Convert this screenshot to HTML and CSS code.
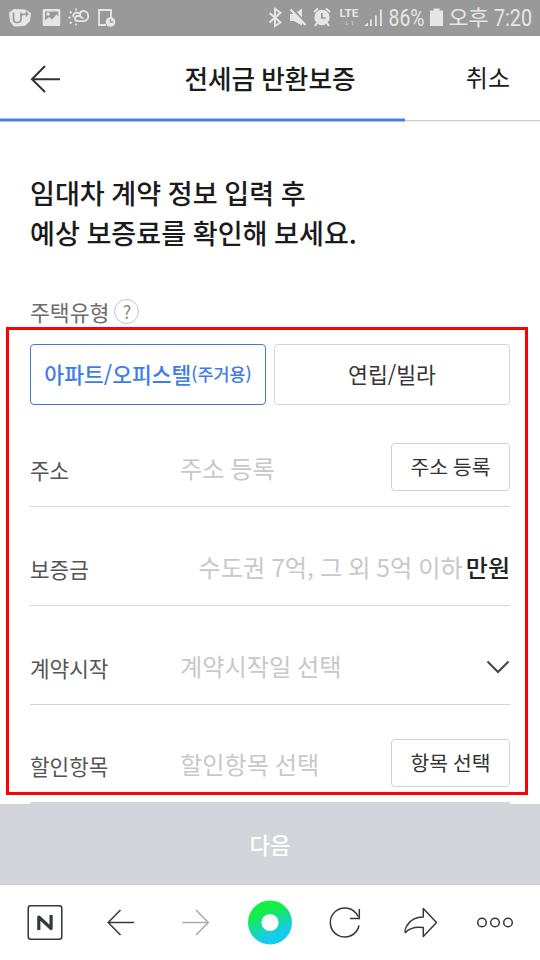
FILE: index.html
```html
<!DOCTYPE html>
<html lang="ko">
<head>
<meta charset="utf-8">
<title>전세금 반환보증</title>
<link rel="stylesheet" href="styles.css">
</head>
<body>
<div class="app">
  <div class="status">
    <svg width="130" height="36" viewBox="0 0 130 36" fill="#e6e6e6">
      <path d="M9 12.500L14 9l11 .5 6 3.500-1 8-5 5-11 .5-4-5z"/>
      <path d="M13.500 12.500V19q0 3.500 3.700 3.500T21 19v-6.500M21 17q0-3 4-3M26.500 11.500v5M24.500 14h4" fill="none" stroke="#999" stroke-width="1.700"/>
      <path fill-rule="evenodd" d="M44 9h15q1.300 0 1.300 1.300v14.200q0 1.500-1.300 1.500H44q-1.300 0-1.300-1.500V10.300Q42.700 9 44 9zM45 11.500v9l4-3.500 3 2.500 4.500-5 1.800 2V11.500z"/>
      <circle cx="48" cy="14" r="1.800"/>
      <g fill="none" stroke="#e6e6e6" stroke-width="1.800">
        <path d="M79.300 13.800a3.500 3.500 0 0 0-6 3.200M80.500 16.500c-1-1-5.500-1-5.500 2 0 1.800 1.300 2.700 3 2.700h5c3 0 5.200-2 5.200-5s-2-5.200-4.700-5.200c-2 0-3.500 1.500-3.500 3.500 0 2.200 1.500 3.500 3.500 3.500"/>
        <path d="M76 8.500v2M70 11.500l1.500 1.500M68.500 17.500h2M70 23.500l1.500-1.500M76 23.500v2"/>
        <path d="M106 25h-7V10h12v8.500"/>
      </g>
      <circle cx="110.500" cy="22" r="4.800"/>
      <path d="M110.500 19v3.200h2.700" fill="none" stroke="#999" stroke-width="1.300"/>
    </svg>
    <svg width="275" height="36" viewBox="265 0 275 36" fill="#e6e6e6">
      <path d="M269.500 13l11 9.500-5.500 3.500V9l5.500 3.800-11 9.700" fill="none" stroke="#e6e6e6" stroke-width="2"/>
      <path d="M290 14h4l8-5.500v17L294 21h-4z"/>
      <path d="M292 8.500l16 17" stroke="#999" stroke-width="2.500"/>
      <path d="M290.500 9.500l15 15.500" stroke="#e6e6e6" stroke-width="2.200"/>
      <circle cx="322" cy="17.500" r="7.700"/>
      <path d="M314 12l4-3.500M330 12l-4-3.500M317 23l-2 3M327 23l2 3" stroke="#e6e6e6" stroke-width="2"/>
      <path d="M321.800 13v5h4" fill="none" stroke="#999" stroke-width="1.700"/>
      <text class="lte" x="339.500" y="17" textLength="19" lengthAdjust="spacingAndGlyphs">LTE</text>
      <path d="M346.500 21v4m-1.500-1.500l1.500 1.500 1.500-1.500M352.500 25v-4m-1.500 1.500l1.500-1.500 1.500 1.500" fill="none" stroke="#bbb"/>
      <path d="M364 26h4v-3.500zM370 19.500h1.800V26H370zM375 15.500h1.800V26H375zM380 9.500h1.800V26H380z"/>
      <text class="num" x="388.500" y="26" textLength="36" lengthAdjust="spacingAndGlyphs">86%</text>
      <path d="M433.500 8.500h6v2h3.500V26h-13V10.500h3.500z"/>
      <text class="ko" x="448.500" y="25" textLength="40" lengthAdjust="spacingAndGlyphs">오후</text>
      <text class="num" x="494" y="26" textLength="38" lengthAdjust="spacingAndGlyphs">7:20</text>
    </svg>
  </div>

  <header class="header">
    <svg class="back" width="32" height="30" viewBox="0 0 32 30" fill="none" stroke="#333" stroke-width="2"><path d="M15 2L2 15.200 15 28M2 15.200h28"/></svg>
    <h1 class="title">전세금 반환보증</h1>
    <span class="cancel">취소</span>
  </header>
  <div class="progress"><div class="progress-fill"></div></div>

  <main class="content">
    <h2 class="headline">임대차 계약 정보 입력 후<br>예상 보증료를 확인해 보세요.</h2>
    <div class="type-label"><span>주택유형</span><span class="help">?</span></div>
    <div class="types">
      <div class="type selected">아파트/오피스텔<small>(주거용)</small></div>
      <div class="type">연립/빌라</div>
    </div>
    <div class="row">
      <span class="label">주소</span><span class="value">주소 등록</span><span class="btn">주소 등록</span>
    </div>
    <div class="row">
      <span class="label">보증금</span><span class="value amount">수도권 7억, 그 외 5억 이하</span><span class="unit">만원</span>
    </div>
    <div class="row">
      <span class="label">계약시작</span><span class="value">계약시작일 선택</span>
      <svg class="chevron" width="24" height="16" viewBox="0 0 24 16" fill="none" stroke="#444" stroke-width="2"><path d="M1.500 2.500L12 13 22.500 2.500"/></svg>
    </div>
    <div class="row">
      <span class="label">할인항목</span><span class="value">할인항목 선택</span><span class="btn">항목 선택</span>
    </div>
    <div class="highlight"></div>
  </main>

  <div class="next">다음</div>
  <nav class="nav">
    <svg width="540" height="75" viewBox="0 885 540 75" fill="none" stroke="#34383c" stroke-width="1.500">
      <defs><linearGradient id="ring" x1=".3" y1="0" x2=".7" y2="1"><stop offset=".12" stop-color="#12ef47"/><stop offset=".9" stop-color="#18cbed"/></linearGradient></defs>
      <rect x="28.200" y="905.700" width="33.600" height="33.600" rx="2.500"/>
      <path d="M38.800 930V917l12.300 11.500V915" stroke-width="3.200" stroke-linejoin="round"/>
      <path d="M120.500 910l-12.300 12.500 12.300 12.500M108.200 922.500H134"/>
      <path d="M196 910l12.300 12.500L196 935M208.300 922.500h-26" stroke="#aaa"/>
      <circle cx="270" cy="922.500" r="15.300" stroke="url(#ring)" stroke-width="13.400"/>
      <path d="M359 925.500A14.500 14.500 0 1 1 358 916.500M359.300 909v9.500H350"/>
      <path d="M423.300 908.500L436.500 922.500l-13.200 14v-9q-12-1.500-17.800 5-1.500-1.500 1.500-7 5-8.500 16.300-8.500z" stroke-linejoin="round"/>
      <circle cx="482" cy="922.500" r="4.300"/><circle cx="495" cy="922.500" r="4.300"/><circle cx="508" cy="922.500" r="4.300"/>
    </svg>
  </nav>
</div>
</body>
</html>
```
FILE: styles.css
```css
* { box-sizing: border-box; }
body {
  margin: 0;
  background: #fff;
  font-family: "Noto Sans CJK KR", sans-serif;
  color: #1b1b1b;
}
svg { display: block; flex: none; }
.app {
  width: 540px;
  height: 960px;
  display: flex;
  flex-direction: column;
  overflow: hidden;
}
.status {
  height: 36px;
  flex: none;
  display: flex;
  justify-content: space-between;
  background: #999;
}
.lte { font: bold 11.5px Roboto, sans-serif; }
.num { font: 23px Roboto, sans-serif; }
.ko { font: 21px "Noto Sans CJK KR", sans-serif; }

.header {
  height: 82px;
  flex: none;
  padding: 0 30px;
  display: grid;
  grid-template-columns: 80px 1fr 80px;
  align-items: center;
}
.back { margin-top: 4px; }
.title {
  margin: 1px 0 0;
  text-align: center;
  font-size: 25.6px;
  font-weight: 500;
  line-height: 40px;
  word-spacing: -1px;
  white-space: nowrap;
}
.cancel {
  text-align: right;
  font-size: 24px;
  line-height: 40px;
}
.progress {
  height: 4px;
  flex: none;
  background: linear-gradient(#fff 2px, #ccd0d0 2px, #ccd0d0 3px, #eee 3px);
}
.progress-fill {
  width: 405px;
  height: 4px;
  background: #477ed8;
  border-top: 1px solid #a3c2f2;
  border-bottom: 1px solid #a3c2f2;
}
.content {
  height: 682px;
  flex: none;
  position: relative;
  padding: 51px 30px 0;
}
.headline {
  margin: 0;
  font-size: 27.1px;
  font-weight: 500;
  line-height: 39.5px;
  word-spacing: -1px;
  white-space: nowrap;
}
.type-label {
  height: 36px;
  margin-top: 44px;
  display: flex;
  gap: 5px;
  font-size: 21.6px;
  line-height: 32px;
  color: #6b6b6b;
}
.help {
  width: 25px;
  height: 25px;
  margin-top: 1px;
  border: 1.5px solid #c4c4c4;
  border-radius: 50%;
  text-align: center;
  font: 18px/23px "Noto Sans CJK KR", sans-serif;
  color: #888;
}
.types {
  margin-top: 12px;
  display: grid;
  grid-template-columns: 1fr 1fr;
  gap: 8px;
}
.type {
  height: 61px;
  border: 1px solid #d4d6d8;
  border-radius: 4px;
  padding-bottom: 2px;
  display: flex;
  align-items: center;
  justify-content: center;
  font-size: 21.6px;
  color: #333;
  white-space: nowrap;
}
.type.selected {
  border-color: #4277cf;
  color: #3e7ceb;
  font-weight: 500;
  font-size: 21.5px;
}
.type small { font-size: 17.4px; }
.row {
  height: 99px;
  padding-top: 26px;
  border-bottom: 1px solid #d6d6d6;
  display: flex;
  align-items: center;
}
.types + .row { height: 102px; padding-top: 29px; }
.row:nth-last-child(2) { height: 100px; border-bottom: 2px solid #d6d7da; margin-top: -1px; }
.type-label .help { position: relative; top: 2px; }
.label {
  width: 150px;
  flex: none;
  margin-top: -2px;
  font-size: 21.3px;
  color: #555;
}
.value {
  flex: 1;
  margin-top: -5px;
  font-size: 24.2px;
  word-spacing: -1px;
  color: #c8c8c8;
  white-space: nowrap;
}
.amount { text-align: right; padding-right: 3px; word-spacing: -.7px; }
.unit { margin-top: -5px; font-size: 24px; font-weight: 500; color: #222; }
.chevron { margin-top: -2px; }
.btn {
  width: 119px;
  height: 48px;
  margin-top: -6px;
  border: 1px solid #d0d2d4;
  border-radius: 4px;
  text-align: center;
  font-size: 20.4px;
  line-height: 45px;
  word-spacing: -.5px;
  color: #333;
}
.highlight {
  position: absolute;
  left: 6px;
  top: 205px;
  width: 522px;
  height: 468px;
  border: 3px solid #f00;
}
.next {
  height: 81px;
  flex: none;
  background: #d4d5da;
  border-bottom: 1px solid #c6c7cb;
  text-align: center;
  font-size: 22.3px;
  font-weight: 500;
  line-height: 80px;
  color: #fff;
}
.nav { height: 75px; flex: none; }
```
